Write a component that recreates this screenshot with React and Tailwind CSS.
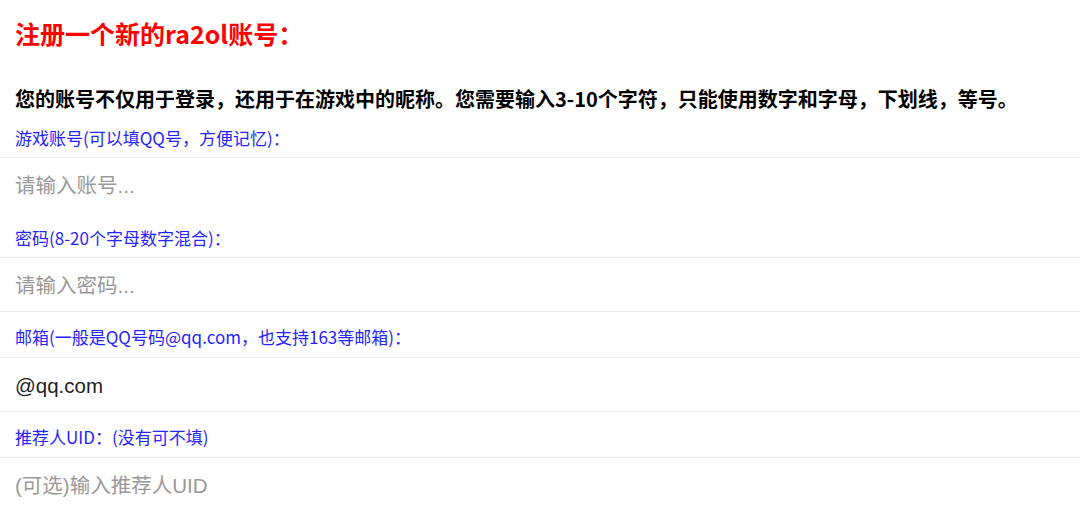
import React from 'react';

const cjk = "font-['Noto_Sans_CJK_SC','Noto_Sans',sans-serif]";
const inputFont = "font-['Liberation_Sans','Noto_Sans_CJK_SC',sans-serif]";

function Label({ children, tight }) {
  return (
    <div className={`flex items-end px-[15px] text-[17px] leading-[18px] text-[#2424ff] ${tight ? 'h-[45px] pb-[11px]' : 'h-[46px] pb-[10px]'} ${cjk}`}>
      {children}
    </div>
  );
}

function Field({ placeholder, value, bottom }) {
  return (
    <div className={`flex items-center border-t border-[#ececec] ${bottom ? 'h-[55px] border-b' : 'h-[54px]'}`}>
      <input
        className={`w-full h-full px-[15px] pt-[3px] bg-transparent outline-none text-[20.5px] text-[#222] placeholder:text-[#999] ${inputFont}`}
        placeholder={placeholder}
        defaultValue={value}
      />
    </div>
  );
}

export default function App() {
  return (
    <div className="w-[1080px] h-[520px] bg-white overflow-hidden">
      <div className={`h-[68px] pt-[18px] px-[15px] ${cjk}`}>
        <h2 className="text-[25px] leading-[30px] font-bold text-[#ff0000]">注册一个新的ra2ol账号：</h2>
      </div>
      <div className={`h-[43px] flex items-end px-[15px] ${cjk}`}>
        <p className="text-[20px] leading-[24px] font-bold text-black">
          您的账号不仅用于登录，还用于在游戏中的昵称。您需要输入3-10个字符，只能使用数字和字母，下划线，等号。
        </p>
      </div>

      <Label>游戏账号(可以填QQ号，方便记忆)：</Label>
      <Field placeholder="请输入账号..." />

      <Label>密码(8-20个字母数字混合)：</Label>
      <Field placeholder="请输入密码..." bottom />

      <Label tight>邮箱(一般是QQ号码@qq.com，也支持163等邮箱)：</Label>
      <Field value="@qq.com" bottom />

      <Label tight>推荐人UID：(没有可不填)</Label>
      <Field placeholder="(可选)输入推荐人UID" />
    </div>
  );
}
